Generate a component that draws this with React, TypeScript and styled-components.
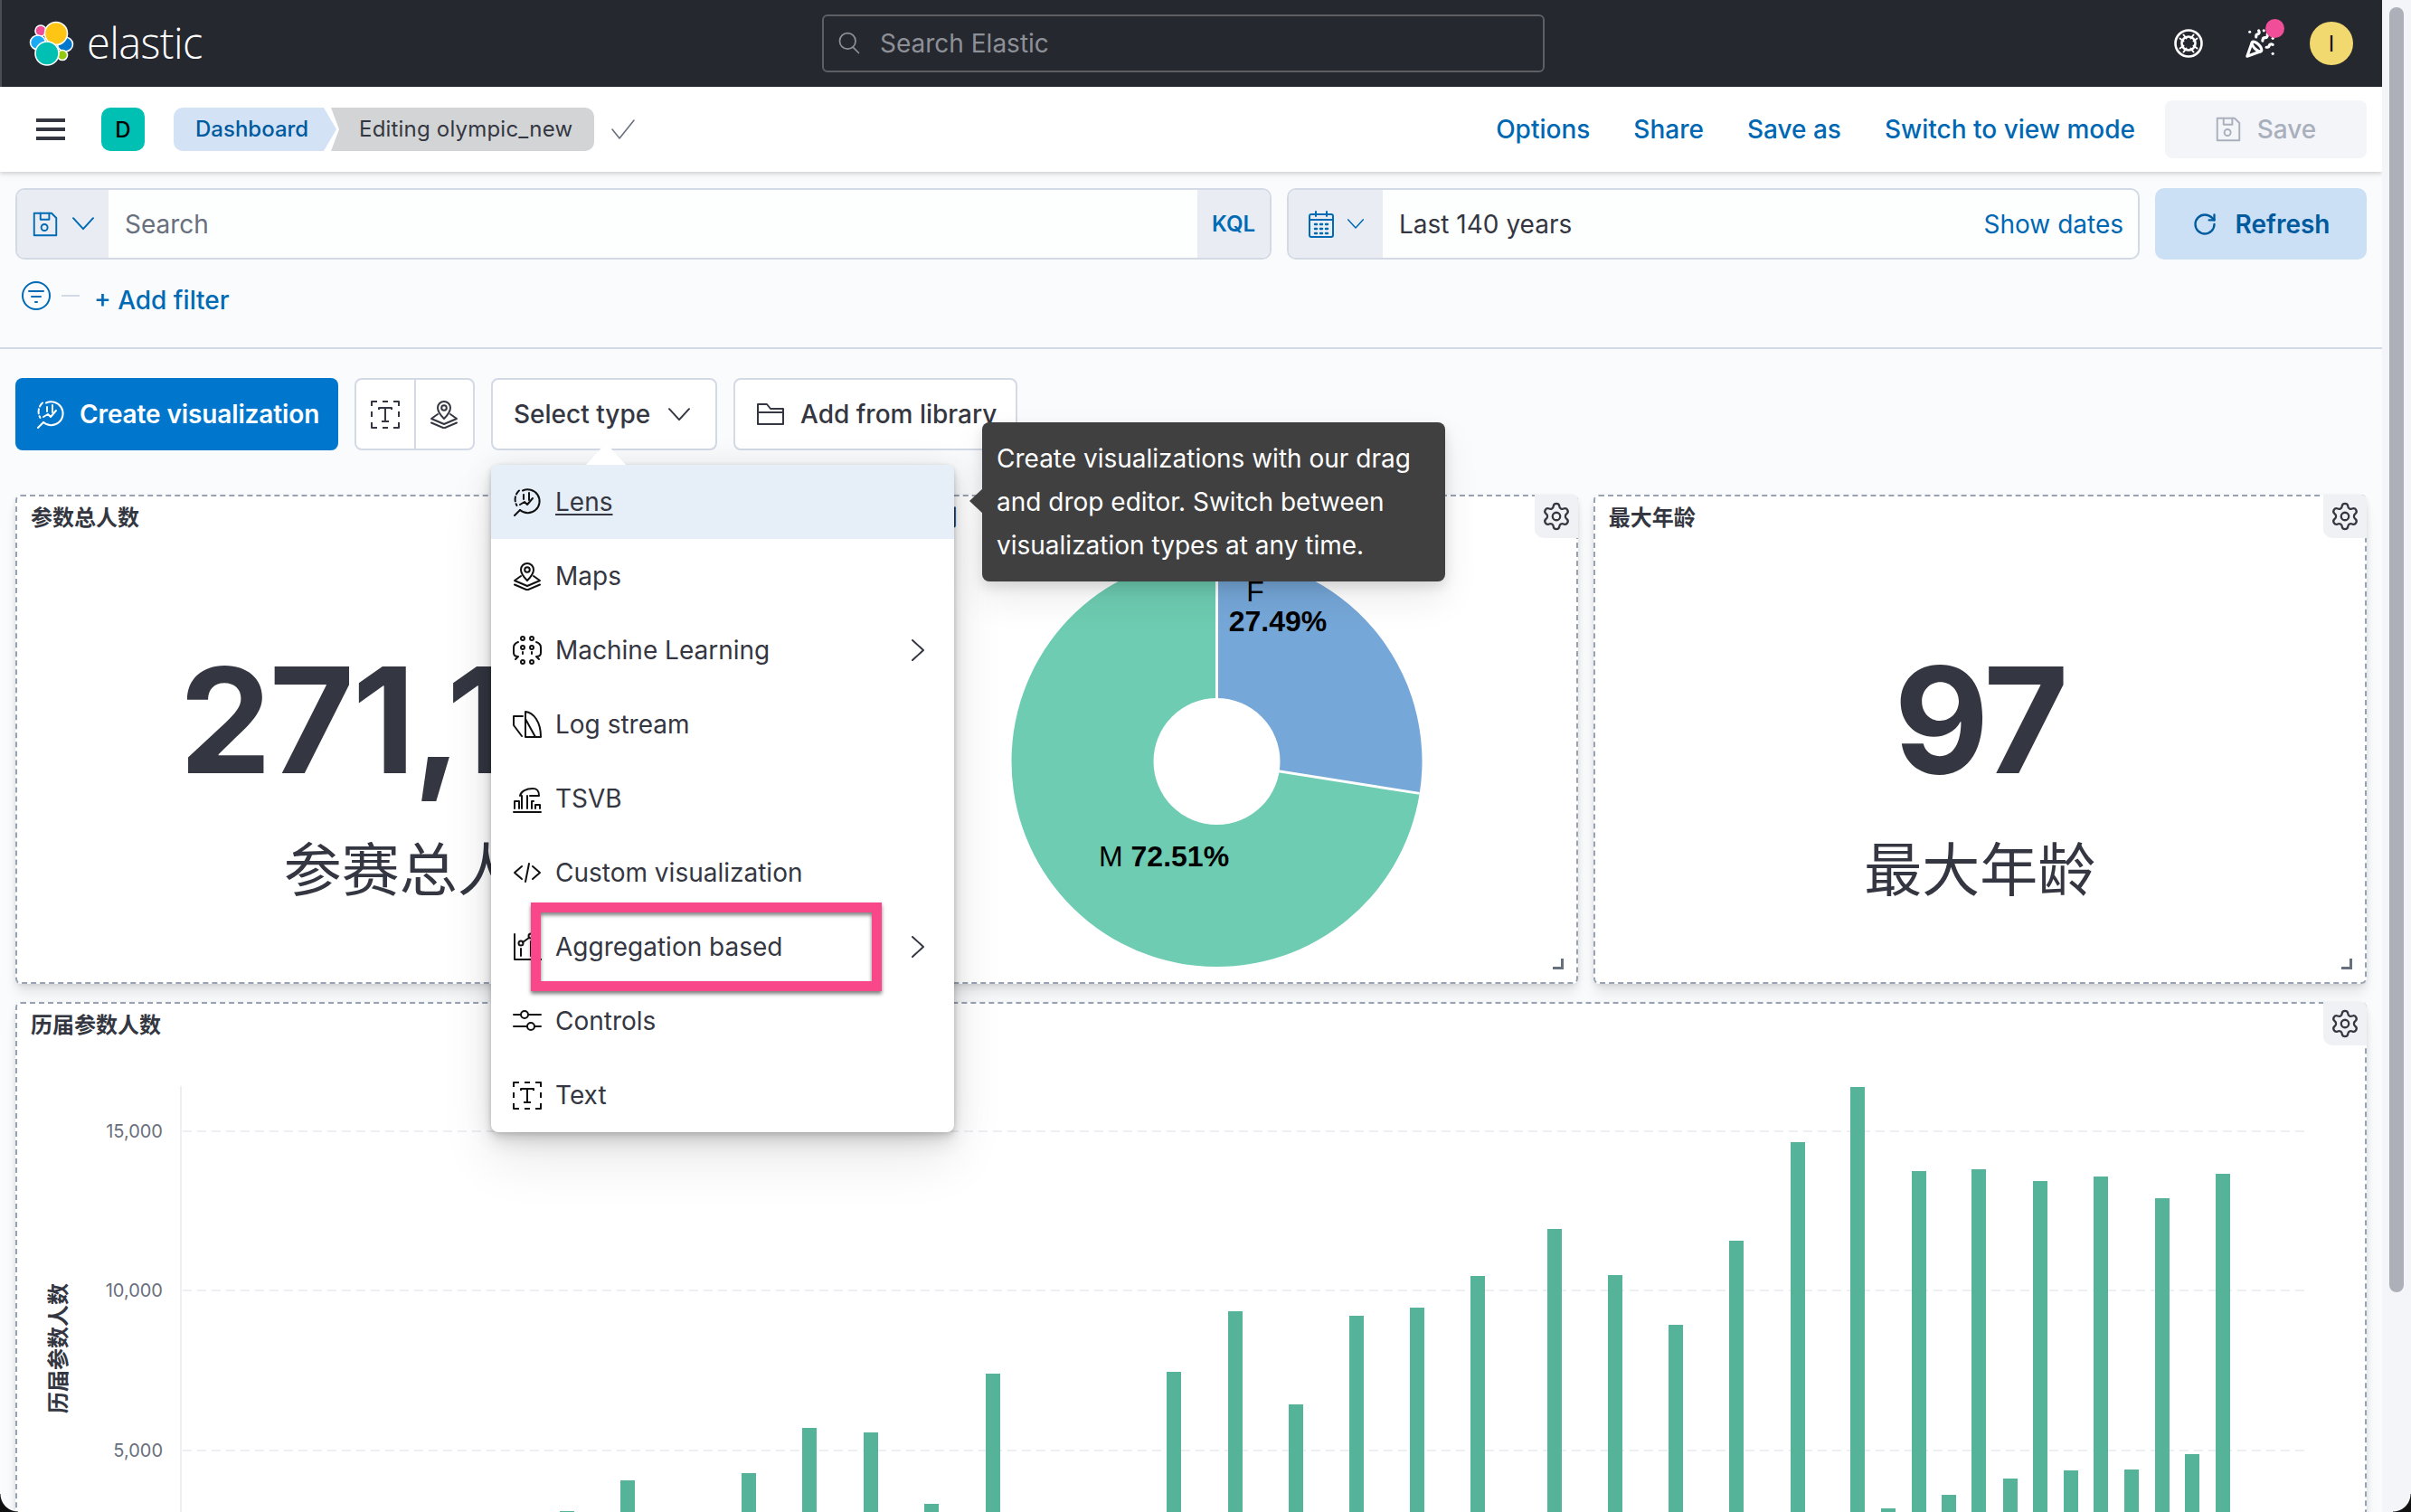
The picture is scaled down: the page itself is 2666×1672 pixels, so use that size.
import React from "react";
import styled, { createGlobalStyle } from "styled-components";
import { PartyPopper, Settings, RotateCw } from "lucide-react";

const FONT = `Inter, "Noto Sans CJK SC", "Noto Sans", sans-serif`;

const Global = createGlobalStyle`
  html, body { margin: 0; padding: 0; height: 1672px; overflow: hidden; background: #f4f5f8; }
  * { box-sizing: border-box; }
  body { font-family: ${FONT}; color: #343741; }
`;

const Page = styled.div`
  display: flex;
  width: 2666px;
  height: 1672px;
  position: relative;
  overflow: hidden;
`;
const Main = styled.div`
  width: 2634px;
  height: 1672px;
  display: flex;
  flex-direction: column;
  overflow: hidden;
  background: #fafbfd;
`;
const Gutter = styled.div`
  width: 32px;
  height: 1672px;
  background: #f4f5f8;
  padding: 8px 8px 0;
`;
const Thumb = styled.div`
  width: 16px;
  height: 1421px;
  border-radius: 8px;
  background: #adb0b9;
`;
const Corner = styled.div<{ $side: "left" | "right" }>`
  position: absolute;
  bottom: 0;
  ${(p) => p.$side}: 0;
  width: 20px;
  height: 20px;
  background: radial-gradient(
    circle at ${(p) => (p.$side === "left" ? "100% 0" : "0 0")},
    transparent 19px,
    #111 20px
  );
`;

/* Header */
const Header = styled.header`
  height: 96px;
  flex: none;
  background: #25282f;
  border-left: 2px solid #4b4d52;
  display: flex;
  align-items: center;
  padding-left: 30px;
  position: relative;
`;
const Brand = styled.div`
  display: flex;
  align-items: center;
  gap: 14px;
  width: 877px;
`;
const BrandName = styled.span`
  font-family: "Open Sans", sans-serif;
  font-weight: 300;
  font-size: 47px;
  letter-spacing: -0.6px;
  color: #fff;
  line-height: 1;
  margin-top: -2px;
`;
const GlobalSearch = styled.div`
  width: 799px;
  height: 64px;
  border: 2px solid #5d5f65;
  border-radius: 6px;
  display: flex;
  align-items: center;
  gap: 20px;
  padding-left: 14px;
  color: #8e9097;
  font-size: 28px;
`;
const HeaderIcons = styled.div`
  margin-left: auto;
  display: flex;
  align-items: center;
  padding-right: 32px;
  color: #fff;
  gap: 46px;
`;
const Notify = styled.div`
  position: relative;
  display: flex;
`;
const Dot = styled.span`
  position: absolute;
  width: 21px;
  height: 21px;
  border-radius: 50%;
  background: #f04e98;
  right: -10px;
  top: -10px;
`;
const Avatar = styled.div`
  width: 48px;
  height: 48px;
  border-radius: 50%;
  background: #f1d86f;
  color: #111;
  font-size: 24px;
  display: flex;
  align-items: center;
  justify-content: center;
  margin-left: -8px;
`;

/* Nav bar */
const NavBar = styled.nav`
  height: 94px;
  flex: none;
  background: #fff;
  box-shadow: 0 2px 4px rgba(0, 0, 0, 0.14), 0 4px 10px rgba(0, 0, 0, 0.04);
  position: relative;
  z-index: 2;
  display: flex;
  align-items: center;
  padding: 0 17px 0 40px;
`;
const Burger = styled.div`
  width: 32px;
  height: 24px;
  display: flex;
  flex-direction: column;
  justify-content: space-between;
  margin-right: 40px;
  span { display: block; height: 4px; background: #343741; }
`;
const AppBadge = styled.div`
  width: 48px;
  height: 48px;
  border-radius: 10px;
  background: #00bfb3;
  color: #000;
  font-size: 24px;
  font-weight: 500;
  display: flex;
  align-items: center;
  justify-content: center;
  margin-right: 32px;
`;
const CrumbFirst = styled.div`
  height: 48px;
  width: 180px;
  background: #d3e3f5;
  color: #005a9e;
  font-size: 24px;
  font-weight: 500;
  line-height: 48px;
  padding-left: 24px;
  border-radius: 10px 0 0 10px;
  clip-path: polygon(0 0, calc(100% - 14px) 0, 100% 50%, calc(100% - 14px) 100%, 0 100%);
`;
const CrumbLast = styled.div`
  height: 48px;
  width: 291px;
  margin-left: -6px;
  background: #d3d4d6;
  color: #343741;
  font-size: 24px;
  letter-spacing: 0.2px;
  line-height: 48px;
  padding-left: 31px;
  border-radius: 0 10px 10px 0;
  clip-path: polygon(0 0, 100% 0, 100% 100%, 0 100%, 9px 50%);
`;
const CheckWrap = styled.div`
  margin-left: 19px;
  color: #69707d;
  display: flex;
`;
const NavActions = styled.div`
  margin-left: auto;
  display: flex;
  align-items: center;
  gap: 48px;
`;
const NavLink = styled.span`
  color: #0068b3;
  font-size: 28px;
  font-weight: 500;
`;
const SaveButton = styled.div`
  width: 223px;
  height: 64px;
  margin-left: -15px;
  border-radius: 8px;
  background: #f4f5f8;
  color: #a9b0bd;
  font-size: 28px;
  font-weight: 500;
  display: flex;
  align-items: center;
  justify-content: center;
  gap: 18px;
`;

/* Query */
const QuerySection = styled.section`
  flex: none;
  height: 196px;
  padding: 18px 17px 0;
  border-bottom: 2px solid #d3dae6;
  background: #fafbfd;
`;
const QueryRow = styled.div`
  display: flex;
  gap: 17px;
  height: 79px;
`;
const FieldGroup = styled.div<{ $w?: number }>`
  ${(p) => (p.$w ? `width: ${p.$w}px;` : "flex: 1;")}
  display: flex;
  border: 2px solid #d3dae6;
  border-radius: 10px;
  overflow: hidden;
  background: #fdfefe;
`;
const Prepend = styled.div<{ $w: number; $gap: number }>`
  width: ${(p) => p.$w}px;
  flex: none;
  background: #e9edf3;
  color: #006bb4;
  display: flex;
  align-items: center;
  justify-content: center;
  gap: ${(p) => p.$gap}px;
`;
const FieldBody = styled.div`
  flex: 1;
  display: flex;
  align-items: center;
  justify-content: space-between;
  padding: 0 16px 0 18px;
  font-size: 28px;
`;
const Placeholder = styled.span`
  color: #69707d;
`;
const Append = styled.div`
  width: 80px;
  background: #e9edf3;
  color: #006bb4;
  font-size: 24px;
  font-weight: 600;
  display: flex;
  align-items: center;
  justify-content: center;
`;
const ShowDates = styled.span`
  color: #0068b3;
  font-size: 28px;
`;
const RefreshButton = styled.div`
  width: 234px;
  border-radius: 10px;
  background: #cce0f5;
  color: #005a9e;
  font-size: 28px;
  font-weight: 600;
  display: flex;
  align-items: center;
  justify-content: center;
  gap: 20px;
`;
const FilterRow = styled.div`
  display: flex;
  align-items: flex-start;
  padding: 24px 0 0 7px;
  color: #006bb4;
`;
const FilterDash = styled.span`
  width: 20px;
  height: 2px;
  background: #d3dae6;
  margin: 15px 16px 0 12px;
`;
const AddFilter = styled.span`
  font-size: 28px;
  font-weight: 500;
  line-height: 42px;
`;

/* Dashboard */
const Dashboard = styled.section`
  flex: 1;
  padding: 32px 17px 0;
  background: #fafbfd;
`;
const Toolbar = styled.div`
  display: flex;
  gap: 18px;
  height: 80px;
  margin-bottom: 49px;
  position: relative;
  z-index: 5;
`;
const CreateButton = styled.div`
  width: 357px;
  border-radius: 8px;
  background: #0077cc;
  color: #fff;
  font-size: 28px;
  font-weight: 600;
  letter-spacing: -0.12px;
  display: flex;
  align-items: center;
  gap: 16px;
  padding-left: 23px;
`;
const ToolGroup = styled.div`
  width: 133px;
  display: flex;
  background: #fff;
  border: 2px solid #d3dae6;
  border-radius: 8px;
`;
const ToolCell = styled.div<{ $divided?: boolean }>`
  flex: 1;
  display: flex;
  align-items: center;
  justify-content: center;
  ${(p) => (p.$divided ? "border-right: 2px solid #d3dae6;" : "")}
`;
const ToolButton = styled.div<{ $w: number; $gap: number }>`
  width: ${(p) => p.$w}px;
  position: relative;
  background: #fff;
  border: 2px solid #d3dae6;
  border-radius: 8px;
  font-size: 28px;
  font-weight: 500;
  display: flex;
  align-items: center;
  padding-left: 23px;
  gap: ${(p) => p.$gap}px;
`;
const Menu = styled.div`
  position: absolute;
  left: -2px;
  top: 94px;
  width: 512px;
  background: #fff;
  border-radius: 8px;
  z-index: 3;
  box-shadow: 0 1px 4px rgba(0, 0, 0, 0.1), 0 3px 8px rgba(0, 0, 0, 0.08),
    0 6px 12px rgba(0, 0, 0, 0.07), 0 15px 20px rgba(0, 0, 0, 0.06),
    0 30px 60px rgba(0, 0, 0, 0.09), 0 0 34px rgba(0, 0, 0, 0.08);
  font-weight: 400;
`;
const MenuArrow = styled.span`
  position: absolute;
  left: 105px;
  top: -24px;
  width: 44px;
  height: 24px;
  background: #fff;
  clip-path: polygon(50% 0, 100% 100%, 0 100%);
`;
const MenuItem = styled.div<{ $active?: boolean }>`
  height: 82px;
  display: flex;
  align-items: center;
  gap: 15px;
  padding: 0 33px 0 24px;
  color: #343741;
  font-size: 28px;
  ${(p) => (p.$active ? "background: #e6eef8; border-radius: 8px 8px 0 0;" : "")}
`;
const MenuLabel = styled.span<{ $underline?: boolean }>`
  flex: 1;
  ${(p) => (p.$underline ? "text-decoration: underline; text-underline-offset: 3px;" : "")}
`;
const MenuIconBox = styled.span`
  width: 32px;
  height: 32px;
  color: #111;
  display: flex;
`;
const Highlight = styled.div`
  position: absolute;
  left: 44px;
  top: 484px;
  width: 388px;
  height: 98px;
  border: 11px solid #f9488a;
  box-shadow: 0 3px 4px rgba(0, 0, 0, 0.5), inset 0 3px 4px rgba(0, 0, 0, 0.5);
`;
const Tip = styled.div`
  position: absolute;
  left: 541px;
  top: 47px;
  width: 512px;
  height: 176px;
  background: #404040;
  color: #fff;
  border-radius: 8px;
  padding: 16px;
  z-index: 4;
  font-size: 28px;
  font-weight: 400;
  line-height: 48px;
  box-shadow: 0 6px 14px rgba(0, 0, 0, 0.12), 0 20px 40px rgba(0, 0, 0, 0.08);
  &::before {
    content: "";
    position: absolute;
    left: -14px;
    top: 72px;
    width: 16px;
    height: 30px;
    background: #404040;
    clip-path: polygon(100% 0, 100% 100%, 0 50%);
  }
`;

const PanelGrid = styled.div`
  display: grid;
  grid-template-columns: repeat(3, 1fr);
  gap: 20px 17px;
`;
const Panel = styled.div<{ $wide?: boolean }>`
  position: relative;
  height: ${(p) => (p.$wide ? 700 : 541)}px;
  ${(p) => (p.$wide ? "grid-column: 1 / -1;" : "")}
  background: #fff;
  border: 2px dashed #98a2b3;
  border-radius: 6px;
  display: flex;
  flex-direction: column;
  box-shadow: 0 1px 4px -1px rgba(0, 0, 0, 0.08), 0 3px 8px -1px rgba(0, 0, 0, 0.06),
    0 6px 12px -1px rgba(0, 0, 0, 0.05), 0 15px 15px -1px rgba(0, 0, 0, 0.05);
`;
const PanelTitle = styled.div<{ $tight?: boolean }>`
  height: 44px;
  flex: none;
  padding: 9px 0 0 15px;
  font-size: 24px;
  line-height: 30px;
  font-weight: 700;
  color: #343741;
  ${(p) => (p.$tight ? "letter-spacing: -1px;" : "")}
`;
const Gear = styled.div`
  position: absolute;
  top: -2px;
  right: -2px;
  width: 48px;
  height: 48px;
  background: #f0f1f4;
  border-radius: 0 6px 0 10px;
  color: #343741;
  display: flex;
  align-items: center;
  justify-content: center;
`;
const ResizeMark = styled.span`
  position: absolute;
  right: 14px;
  bottom: 14px;
  width: 12px;
  height: 12px;
  border-right: 3px solid #69707d;
  border-bottom: 3px solid #69707d;
`;
const Metric = styled.div`
  flex: 1;
  display: flex;
  flex-direction: column;
  align-items: center;
  padding-top: 123px;
`;
const MetricValue = styled.div<{ $offset?: boolean }>`
  font-size: 162px;
  font-weight: 700;
  line-height: 160px;
  letter-spacing: ${(p) => (p.$offset ? -2.5 : -3)}px;
  ${(p) => (p.$offset ? "margin-left: 40px;" : "")}
  color: #343741;
  white-space: nowrap;
`;
const MetricLabel = styled.div<{ $offset?: boolean }>`
  font-size: 64px;
  line-height: 80px;
  margin-top: 46px;
  color: #343741;
  white-space: nowrap;
  ${(p) => (p.$offset ? "margin-right: 6px;" : "")}
`;
const ChartSvg = styled.svg`
  display: block;
  flex: none;
`;

/* ---------- icons ---------- */
const Ico: React.FC<{ s?: number; w?: number; h?: number; sw?: number; children: React.ReactNode; vb?: string }> = ({
  s = 32,
  w,
  h,
  sw = 2,
  vb = "0 0 32 32",
  children,
}) => (
  <svg
    width={w ?? s}
    height={h ?? s}
    viewBox={vb}
    fill="none"
    stroke="currentColor"
    strokeWidth={sw}
    strokeLinecap="round"
    strokeLinejoin="round"
  >
    {children}
  </svg>
);

const LogoMark = () => (
  <svg width="50" height="50" viewBox="31 22 50 50">
    <g stroke="#fff" strokeWidth="1.6">
      <circle cx="44" cy="33" r="6" fill="#f04e98" />
      <ellipse cx="41" cy="46" rx="8.5" ry="8" fill="#1ba9f5" />
      <ellipse cx="71" cy="48" rx="8.5" ry="8" fill="#0077cc" />
      <circle cx="68" cy="60" r="5.5" fill="#93c90e" />
      <circle cx="61" cy="36" r="12.5" fill="#fec514" />
      <circle cx="51" cy="58" r="13" fill="#00bfb3" />
    </g>
  </svg>
);
const HelpIcon = () => (
  <Ico s={32} sw={2.6}>
    <circle cx="16" cy="16" r="14.5" />
    <circle cx="16" cy="16" r="7.5" />
    <path d="M6.500 10.500l4 3M10.500 6.500l3 4M25.500 10.500l-4 3M21.500 6.500l-3 4M6.500 21.500l4-3M10.500 25.500l3-4M25.500 21.500l-4-3M21.500 25.500l-3-4" strokeWidth="2" />
  </Ico>
);
const SearchIcon = () => (
  <Ico s={28} sw={2}>
    <circle cx="14" cy="13" r="10" />
    <path d="M21 21l7 7" />
  </Ico>
);
const CheckIcon = () => (
  <Ico w={26} h={22} vb="0 0 26 22" sw={1.6}>
    <path d="M1 11l8 10L25 1" />
  </Ico>
);
const ChevronDown: React.FC<{ w?: number }> = ({ w = 24 }) => (
  <Ico w={w} h={w * 0.6} vb="0 0 24 14" sw={2}>
    <path d="M1 1l11 12L23 1" />
  </Ico>
);
const ChevronRight = () => (
  <Ico w={14} h={24} vb="0 0 14 24" sw={2}>
    <path d="M1 1l12 11L1 23" />
  </Ico>
);
const SaveIcon: React.FC<{ s?: number }> = ({ s = 28 }) => (
  <Ico s={s} sw={2.2}>
    <path d="M2 2h22l6 6v22H2z" />
    <path d="M10 2v8h11V2" />
    <circle cx="15" cy="20" r="4" />
  </Ico>
);
const FilterIcon = () => (
  <Ico s={32} sw={2}>
    <circle cx="16" cy="16" r="15" />
    <path d="M8 11h16M11 17h10M15 23h2" />
  </Ico>
);
const CalendarIcon = () => (
  <Ico w={28} h={30} vb="0 0 28 30" sw={2}>
    <rect x="1" y="4" width="26" height="25" rx="2" />
    <path d="M1 10h26M8 1v5M20 1v5" />
    <path d="M7 15h2M13 15h2M19 15h2M7 20h2M13 20h2M19 20h2M7 25h2M13 25h2M19 25h2" strokeWidth="2.4" />
  </Ico>
);
const LensIcon = () => (
  <Ico sw={2}>
    <path d="M11 3.5A13 13 0 1 1 8 25" />
    <path d="M7 3.5 A13 13 0 0 0 4.5 20" strokeDasharray="5 3" />
    <path d="M2 31l6-6" />
    <path d="M8 19l5-3 3 3 6-7" />
    <path d="M12 8v5M18 6v8" />
  </Ico>
);
const MapsIcon = () => (
  <Ico sw={2}>
    <path d="M16 21c-5-5-7-8.500-7-12a7 7 0 0 1 14 0c0 3.500-2 7-7 12z" />
    <circle cx="16" cy="9" r="2.800" />
    <path d="M9 16l-7 5 14 6 14-6-7-5" />
    <path d="M2 25.500l14 6 14-6" />
  </Ico>
);
const MLIcon = () => (
  <Ico sw={2}>
    <circle cx="11" cy="3" r="2" />
    <circle cx="21" cy="3" r="2" />
    <circle cx="11" cy="13" r="2" />
    <circle cx="21" cy="13" r="2" />
    <circle cx="11" cy="29" r="2" />
    <circle cx="21" cy="29" r="2" />
    <path d="M6 7c-3 1-5 3-5 6v6c0 3 2 4 5 4l-3 3M26 7c3 1 5 3 5 6v6c0 3-2 4-5 4l3 3" />
    <path d="M11 18v2M21 18v2" />
  </Ico>
);
const LogIcon = () => (
  <Ico sw={2}>
    <path d="M14 30V2c9 1 17 11 17 28z" />
    <path d="M14 10l11 20" />
    <path d="M11 7H1v10l9 12" />
  </Ico>
);
const TsvbIcon = () => (
  <Ico sw={2}>
    <path d="M1 31h30" />
    <path d="M2 27v-8h5v8M10 27V13M16 27V13M19 13h10c0-6-2-8-7-8-7 0-13 3-14 8M21 27v-8h2M25 27v-4h5v4" />
  </Ico>
);
const CodeIcon = () => (
  <Ico sw={2}>
    <path d="M10 9l-8 7 8 7M22 9l8 7-8 7M18 6l-4 20" />
  </Ico>
);
const AggIcon = () => (
  <Ico sw={2}>
    <path d="M2 2v28h30" />
    <circle cx="9" cy="12" r="2.500" />
    <circle cx="20" cy="4" r="2.500" />
    <path d="M11 11l7-5M9 18v8M20 10v16M28 10v16" />
  </Ico>
);
const ControlsIcon = () => (
  <Ico sw={2}>
    <circle cx="13" cy="9" r="4" />
    <circle cx="20" cy="22" r="4" />
    <path d="M1 9h8M17 9h14M1 22h15M24 22h7" />
  </Ico>
);
const TextIcon = () => (
  <Ico sw={2}>
    <path
      d="M1 7V2h6M13 2h6M25 2h6v5M1 13v6M31 13v6M1 25v6h6M13 31h6M25 31h6v-6"
      strokeLinecap="butt"
    />
    <path d="M9 11v-2h14v2M16 9v15M12 24h8" strokeLinecap="butt" />
  </Ico>
);
const FolderIcon = () => (
  <Ico sw={2}>
    <path d="M2 27V5h10l4 5h14v17zM2 14h28" />
  </Ico>
);

/* ---------- data ---------- */
const menu: { label: string; icon: React.ReactNode; more?: boolean; active?: boolean }[] = [
  { label: "Lens", icon: <LensIcon />, active: true },
  { label: "Maps", icon: <MapsIcon /> },
  { label: "Machine Learning", icon: <MLIcon />, more: true },
  { label: "Log stream", icon: <LogIcon /> },
  { label: "TSVB", icon: <TsvbIcon /> },
  { label: "Custom visualization", icon: <CodeIcon /> },
  { label: "Aggregation based", icon: <AggIcon />, more: true },
  { label: "Controls", icon: <ControlsIcon /> },
  { label: "Text", icon: <TextIcon /> },
];

const bars: [number, number][] = [
  [627, 1671], [694, 1637], [828, 1629], [895, 1579], [963, 1584], [1030, 1663], [1098, 1519],
  [1298, 1517], [1366, 1450], [1433, 1553], [1500, 1455], [1567, 1446], [1634, 1411], [1719, 1359],
  [1786, 1410], [1853, 1465], [1920, 1372], [1988, 1263], [2054, 1202], [2088, 1668], [2122, 1295],
  [2155, 1653], [2188, 1293], [2223, 1635], [2256, 1306], [2290, 1626], [2323, 1301], [2357, 1625],
  [2391, 1325], [2424, 1608], [2458, 1298],
];
const ticks: [string, number][] = [
  ["15,000", 1251],
  ["10,000", 1427],
  ["5,000", 1604],
];

const Pie = () => {
  const cx = 1344.5, cy = 842, r = 227, hole = 70;
  const a = (27.49 / 100) * 2 * Math.PI;
  const ex = cx + r * Math.sin(a);
  const ey = cy - r * Math.cos(a);
  const sans = `"Liberation Sans", Arial, sans-serif`;
  return (
    <ChartSvg width="851" height="493" viewBox="890 593 851 493">
      <path d={`M${cx} ${cy}V${cy - r}A${r} ${r} 0 0 1 ${ex} ${ey}Z`} fill="#75a7d8" />
      <path d={`M${cx} ${cy}L${ex} ${ey}A${r} ${r} 0 1 1 ${cx} ${cy - r}Z`} fill="#6dccb1" />
      <path d={`M${cx} ${cy - r}V${cy}L${ex} ${ey}`} stroke="#fff" strokeWidth="3" fill="none" />
      <circle cx={cx} cy={cy} r={hole} fill="#fff" />
      <text x="1387" y="665" fontFamily={sans} fontSize="32" textAnchor="middle" fill="#000">F</text>
      <text x="1412" y="698" fontFamily={sans} fontSize="32" fontWeight="700" textAnchor="middle" fill="#000">27.49%</text>
      <text x="1214" y="958" fontFamily={sans} fontSize="32" fill="#000">
        M <tspan fontWeight="700">72.51%</tspan>
      </text>
    </ChartSvg>
  );
};

const BarChart = () => (
  <ChartSvg width="2596" height="518" viewBox="19 1154 2596 518">
    <path d="M200 1201V1672" stroke="#eeeff2" strokeWidth="2" />
    {ticks.map(([t, y]) => (
      <g key={t}>
        <path d={`M202 ${y}H2554`} stroke="#eeeff2" strokeWidth="2" strokeDasharray="10 6" />
        <text x="180" y={y + 7} fontSize="20" textAnchor="end" fill="#69707d" fontFamily={FONT}>{t}</text>
      </g>
    ))}
    {bars.map(([x, y]) => (
      <rect key={x} x={x - 8} y={y} width="16" height={1680 - y} fill="#54b399" />
    ))}
    <text
      transform="translate(73 1491) rotate(-90)"
      fontSize="24"
      fontWeight="700"
      textAnchor="middle"
      fill="#343741"
      fontFamily={FONT}
    >
      历届参数人数
    </text>
  </ChartSvg>
);

const PanelGear = () => (
  <Gear>
    <Settings size={34} strokeWidth={1.6} />
  </Gear>
);

export default function App() {
  return (
    <>
      <Global />
      <Page>
        <Main>
          <Header>
            <Brand>
              <LogoMark />
              <BrandName>elastic</BrandName>
            </Brand>
            <GlobalSearch>
              <SearchIcon />
              Search Elastic
            </GlobalSearch>
            <HeaderIcons>
              <HelpIcon />
              <Notify>
                <PartyPopper size={34} strokeWidth={2.2} />
                <Dot />
              </Notify>
              <Avatar>I</Avatar>
            </HeaderIcons>
          </Header>
          <NavBar>
            <Burger>
              <span />
              <span />
              <span />
            </Burger>
            <AppBadge>D</AppBadge>
            <CrumbFirst>Dashboard</CrumbFirst>
            <CrumbLast>Editing olympic_new</CrumbLast>
            <CheckWrap>
              <CheckIcon />
            </CheckWrap>
            <NavActions>
              <NavLink>Options</NavLink>
              <NavLink>Share</NavLink>
              <NavLink>Save as</NavLink>
              <NavLink>Switch to view mode</NavLink>
              <SaveButton>
                <SaveIcon />
                Save
              </SaveButton>
            </NavActions>
          </NavBar>
          <QuerySection>
            <QueryRow>
              <FieldGroup>
                <Prepend $w={101} $gap={16}>
                  <SaveIcon />
                  <ChevronDown />
                </Prepend>
                <FieldBody>
                  <Placeholder>Search</Placeholder>
                </FieldBody>
                <Append>KQL</Append>
              </FieldGroup>
              <FieldGroup $w={943}>
                <Prepend $w={104} $gap={15}>
                  <CalendarIcon />
                  <ChevronDown w={18} />
                </Prepend>
                <FieldBody>
                  <span>Last 140 years</span>
                  <ShowDates>Show dates</ShowDates>
                </FieldBody>
              </FieldGroup>
              <RefreshButton>
                <RotateCw size={28} strokeWidth={2} />
                Refresh
              </RefreshButton>
            </QueryRow>
            <FilterRow>
              <FilterIcon />
              <FilterDash />
              <AddFilter>+ Add filter</AddFilter>
            </FilterRow>
          </QuerySection>
          <Dashboard>
            <Toolbar>
              <CreateButton>
                <LensIcon />
                Create visualization
              </CreateButton>
              <ToolGroup>
                <ToolCell $divided>
                  <TextIcon />
                </ToolCell>
                <ToolCell>
                  <MapsIcon />
                </ToolCell>
              </ToolGroup>
              <ToolButton $w={250} $gap={20}>
                Select type
                <ChevronDown />
                <Menu>
                  <MenuArrow />
                  {menu.map((m) => (
                    <MenuItem key={m.label} $active={m.active}>
                      <MenuIconBox>{m.icon}</MenuIconBox>
                      <MenuLabel $underline={m.active}>{m.label}</MenuLabel>
                      {m.more && <ChevronRight />}
                    </MenuItem>
                  ))}
                  <Highlight />
                </Menu>
                <Tip>
                  Create visualizations with our drag and drop editor. Switch between visualization types at any time.
                </Tip>
              </ToolButton>
              <ToolButton $w={314} $gap={17}>
                <FolderIcon />
                Add from library
              </ToolButton>
            </Toolbar>
            <PanelGrid>
              <Panel>
                <PanelTitle>参数总人数</PanelTitle>
                <Metric>
                  <MetricValue $offset>271,116</MetricValue>
                  <MetricLabel $offset>参赛总人</MetricLabel>
                </Metric>
                <PanelGear />
                <ResizeMark />
              </Panel>
              <Panel>
                <PanelTitle $tight>性别(F/M)比例</PanelTitle>
                <Pie />
                <PanelGear />
                <ResizeMark />
              </Panel>
              <Panel>
                <PanelTitle>最大年龄</PanelTitle>
                <Metric>
                  <MetricValue>97</MetricValue>
                  <MetricLabel>最大年龄</MetricLabel>
                </Metric>
                <PanelGear />
                <ResizeMark />
              </Panel>
              <Panel $wide>
                <PanelTitle>历届参数人数</PanelTitle>
                <BarChart />
                <PanelGear />
              </Panel>
            </PanelGrid>
          </Dashboard>
        </Main>
        <Gutter>
          <Thumb />
        </Gutter>
        <Corner $side="left" />
        <Corner $side="right" />
      </Page>
    </>
  );
}
